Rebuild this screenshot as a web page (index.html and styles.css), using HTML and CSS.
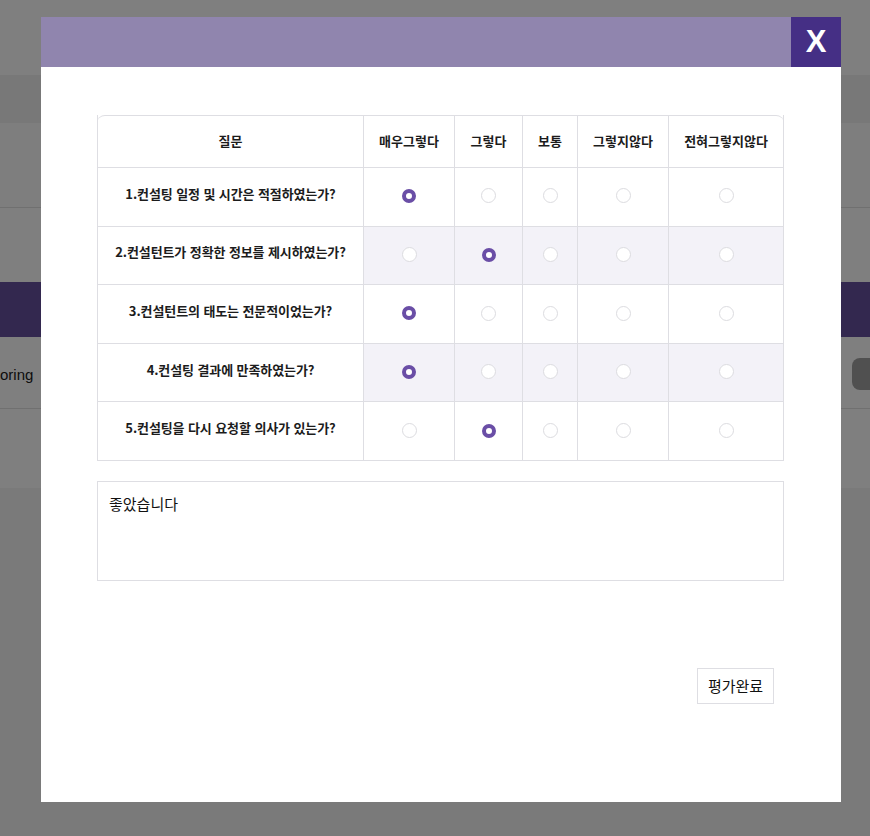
FILE: index.html
```html
<!DOCTYPE html>
<html lang="ko">
<head>
<meta charset="utf-8">
<title>컨설팅 평가</title>
<link rel="stylesheet" href="styles.css">
</head>
<body>
<div class="page">
  <div class="pg-top"></div>
  <div class="pg-nav"></div>
  <div class="pg-sec pg-sec1"></div>
  <div class="pg-sec pg-sec2"></div>
  <div class="pg-band"></div>
  <div class="pg-row">
    <span class="pg-label">oring</span>
    <span class="pg-btn"></span>
  </div>
  <div class="pg-sec pg-sec3"></div>
  <div class="pg-rest"></div>
</div>
<div class="overlay"></div>
<div class="modal">
  <div class="modal-head">
    <button class="close">X</button>
  </div>
  <div class="modal-body">
    <div class="tbl-wrap">
      <table class="survey">
        <thead>
          <tr>
            <th class="c-q">질문</th>
            <th class="c1">매우그렇다</th>
            <th class="c2">그렇다</th>
            <th class="c3">보통</th>
            <th class="c4">그렇지않다</th>
            <th class="c5">전혀그렇지않다</th>
          </tr>
        </thead>
        <tbody>
          <tr>
            <td class="q">1.컨설팅 일정 및 시간은 적절하였는가?</td>
            <td><span class="radio on"></span></td>
            <td><span class="radio"></span></td>
            <td><span class="radio"></span></td>
            <td><span class="radio"></span></td>
            <td><span class="radio"></span></td>
          </tr>
          <tr class="alt">
            <td class="q">2.컨설턴트가 정확한 정보를 제시하였는가?</td>
            <td><span class="radio"></span></td>
            <td><span class="radio on"></span></td>
            <td><span class="radio"></span></td>
            <td><span class="radio"></span></td>
            <td><span class="radio"></span></td>
          </tr>
          <tr>
            <td class="q">3.컨설턴트의 태도는 전문적이었는가?</td>
            <td><span class="radio on"></span></td>
            <td><span class="radio"></span></td>
            <td><span class="radio"></span></td>
            <td><span class="radio"></span></td>
            <td><span class="radio"></span></td>
          </tr>
          <tr class="alt">
            <td class="q">4.컨설팅 결과에 만족하였는가?</td>
            <td><span class="radio on"></span></td>
            <td><span class="radio"></span></td>
            <td><span class="radio"></span></td>
            <td><span class="radio"></span></td>
            <td><span class="radio"></span></td>
          </tr>
          <tr>
            <td class="q">5.컨설팅을 다시 요청할 의사가 있는가?</td>
            <td><span class="radio"></span></td>
            <td><span class="radio on"></span></td>
            <td><span class="radio"></span></td>
            <td><span class="radio"></span></td>
            <td><span class="radio"></span></td>
          </tr>
        </tbody>
      </table>
    </div>
    <div class="comment">좋았습니다</div>
    <div class="actions">
      <button class="submit">평가완료</button>
    </div>
  </div>
</div>
</body>
</html>
```

FILE: styles.css
```css
html, body {
  margin: 0;
  padding: 0;
}
body {
  width: 870px;
  height: 836px;
  overflow: hidden;
  font-family: "Noto Sans CJK KR", "Noto Sans", sans-serif;
  background: #ffffff;
}
.page {
  display: flex;
  flex-direction: column;
  height: 836px;
}
.pg-top { height: 75px; background: #ffffff; }
.pg-nav { height: 48px; background: #f0f0f0; }
.pg-sec { border-bottom: 1px solid #e0e0e0; background: #fcfcfc; }
.pg-sec1 { height: 84px; }
.pg-sec2 { height: 74px; border-bottom: none; background: #ffffff; }
.pg-band { height: 55px; background: #66509e; }
.pg-row {
  height: 71px;
  border-bottom: 1px solid #e0e0e0;
  display: flex;
  align-items: center;
  justify-content: space-between;
  background: #ffffff;
}
.pg-label {
  font-family: "Liberation Sans", sans-serif;
  font-size: 15px;
  color: #1a1a1a;
  margin-left: 0;
  margin-top: 3px;
}
.pg-btn {
  width: 60px;
  height: 32px;
  border-radius: 8px;
  background: #a0a0a0;
  margin-right: -42px;
  margin-top: 3px;
}
.pg-sec3 { height: 79px; border-bottom: none; background: #ffffff; }
.pg-rest { flex: 1; background: #f4f4f4; }

.overlay {
  position: fixed;
  inset: 0;
  background: rgba(0, 0, 0, 0.5);
}
.modal {
  position: fixed;
  left: 41px;
  top: 17px;
  width: 800px;
  height: 785px;
  background: #ffffff;
  display: flex;
  flex-direction: column;
}
.modal-head {
  height: 50px;
  background: #9085ae;
  display: flex;
  justify-content: flex-end;
}
.close {
  width: 50px;
  height: 50px;
  border: none;
  margin: 0;
  padding: 0;
  background: #452f85;
  color: #ffffff;
  font-family: "Liberation Sans", sans-serif;
  font-weight: bold;
  font-size: 31px;
  line-height: 50px;
}
.modal-body {
  padding: 48px 57px 0 56px;
  display: flex;
  flex-direction: column;
}
.tbl-wrap {
  border-top: 1px solid #dedee3;
  border-radius: 8px 8px 0 0;
}
.survey {
  width: 687px;
  border-collapse: collapse;
  table-layout: fixed;
  margin-top: -1px;
}
.survey th, .survey td {
  border: 1px solid #dedee3;
  text-align: center;
  vertical-align: middle;
  padding: 0;
  color: #1c1c1c;
  line-height: 18px;
}
.survey thead th {
  border-top: none;
  height: 52px;
  font-size: 13px;
  font-weight: 600;
}
.survey tbody td {
  height: 57.6px;
}
.survey .c-q { width: 265px; }
.survey .c1 { width: 90px; }
.survey .c2 { width: 67px; }
.survey .c3 { width: 54px; }
.survey .c4 { width: 90px; }
.survey .c5 { width: auto; }
.survey tbody td.q {
  height: 51.6px;
  font-size: 13px;
  font-weight: bold;
  padding-bottom: 6px;
  letter-spacing: -0.1px;
}
.survey tr.alt td:not(.q) {
  background: #f3f2f8;
}
.radio {
  display: inline-block;
  box-sizing: border-box;
  width: 15px;
  height: 15px;
  border-radius: 50%;
  border: 1px solid #dcdce0;
  background: #ffffff;
  vertical-align: middle;
  margin-bottom: 4px;
}
.radio.on {
  width: 14px;
  height: 14px;
  border: 4px solid #6a4ea6;
}
.comment {
  margin-top: 20px;
  height: 100px;
  box-sizing: border-box;
  border: 1px solid #dedee3;
  padding: 12px 11px;
  font-size: 15px;
  color: #111111;
  line-height: 20px;
}
.actions {
  display: flex;
  justify-content: flex-end;
  margin-top: 87px;
  padding-right: 10px;
}
.submit {
  width: 77px;
  height: 36px;
  background: #ffffff;
  border: 1px solid #dedee3;
  font-family: "Noto Sans CJK KR", sans-serif;
  font-size: 15px;
  color: #111111;
  padding: 0;
}
```
